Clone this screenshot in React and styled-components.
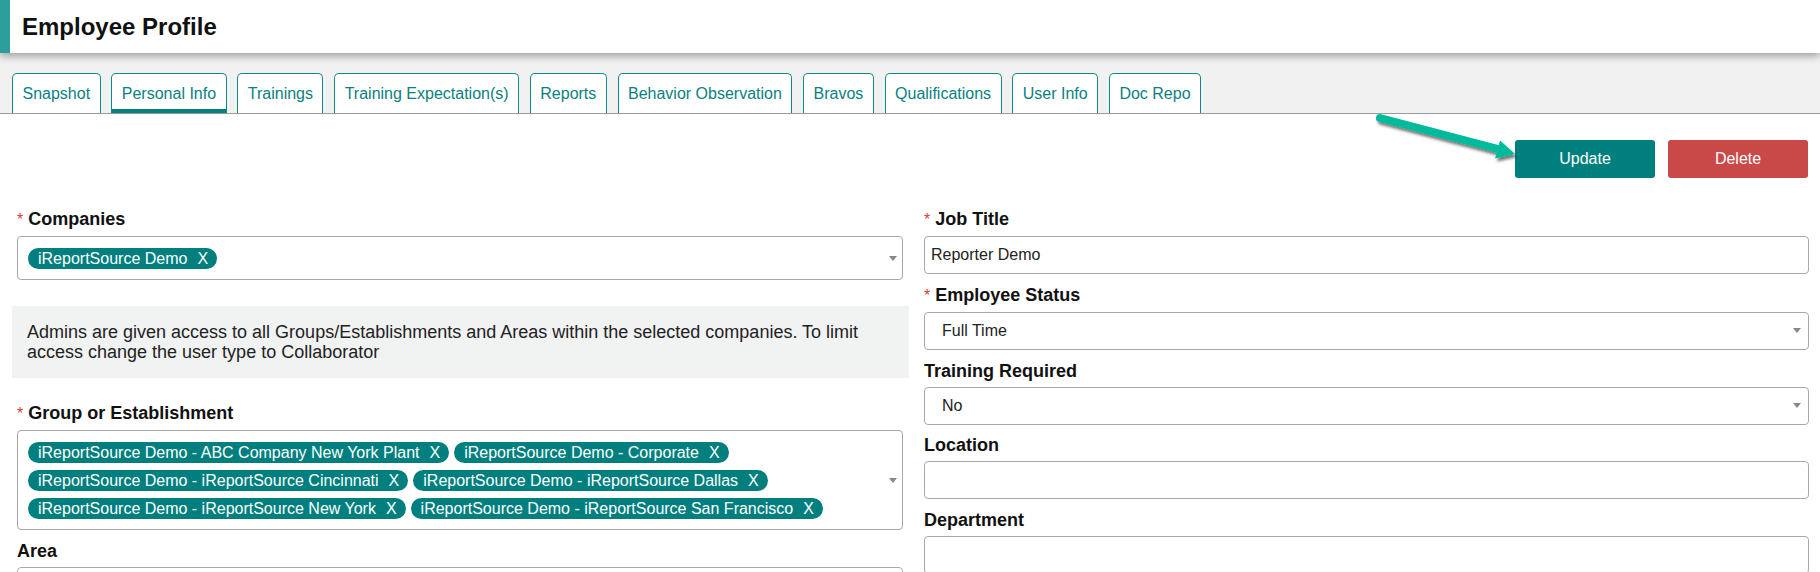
import styled, { createGlobalStyle } from "styled-components";

const GlobalStyle = createGlobalStyle`
  * {
    box-sizing: border-box;
  }
  body {
    margin: 0;
    background: #fff;
    color: #111;
    font-family: "Liberation Sans", Arial, Helvetica, sans-serif;
  }
`;

const Page = styled.div`
  position: relative;
  height: 572px;
  overflow: hidden;
`;

const Header = styled.header`
  position: relative;
  z-index: 2;
  display: flex;
  align-items: center;
  height: 53px;
  padding-left: 12px;
  background: #fff;
  border-left: 10px solid #2b9f9c;
  box-shadow: 0 3px 8px rgba(0, 0, 0, 0.35);
`;

const Title = styled.h1`
  margin: 0;
  font-size: 24px;
  font-weight: bold;
  color: #111;
`;

const TabBar = styled.nav`
  display: flex;
  align-items: flex-end;
  gap: 10.7px;
  height: 61px;
  padding: 20px 0 0 12px;
  background: #f1f1f1;
  border-bottom: 1px solid #9b9b9b;
`;

const Tab = styled.button`
  display: flex;
  align-items: center;
  height: 40px;
  padding: 0 9.5px;
  background: #fff;
  border: 1px solid #11898a;
  border-bottom: none;
  border-radius: 5px 5px 0 0;
  color: #0b7f80;
  font-family: inherit;
  font-size: 16px;
  white-space: nowrap;
  cursor: pointer;
  box-shadow: ${(p) => (p.$active ? "inset 0 -4px 0 #00807f" : "none")};
`;

const Content = styled.main`
  padding: 0 11px 0 12px;
`;

const Actions = styled.div`
  display: flex;
  justify-content: flex-end;
  gap: 13px;
  margin: 26px 1px 30px 0;
`;

const ActionButton = styled.button`
  width: 140px;
  height: 38px;
  border: none;
  border-radius: 3px;
  background: ${(p) => (p.$danger ? "#c94949" : "#007f7f")};
  color: #fff;
  font-family: inherit;
  font-size: 16px;
  cursor: pointer;
`;

const Form = styled.div`
  display: grid;
  grid-template-columns: 897px 1fr;
  column-gap: 15px;
  align-items: start;
`;

const LeftColumn = styled.div`
  padding: 0 6px 0 5px;
`;

const RightColumn = styled.div``;

const Field = styled.div`
  margin-bottom: ${(p) => p.$gap ?? 9.75}px;
`;

const Label = styled.label`
  display: block;
  margin-bottom: 5px;
  font-size: 18px;
  font-weight: bold;
  line-height: 22px;
  color: #111;
`;

const Required = styled.span`
  margin-right: 5px;
  color: #d43f3a;
  font-size: 16px;
  font-weight: normal;
`;

const MultiSelect = styled.div`
  display: flex;
  align-items: center;
  min-height: 44px;
  padding: 11px 5px 10px 10px;
  background: #fff;
  border: 1px solid #a9a9a9;
  border-radius: 4px;
`;

const ChipList = styled.div`
  flex: 1;
  display: flex;
  flex-wrap: wrap;
  gap: 7px 5px;
`;

const Chip = styled.span`
  display: inline-flex;
  align-items: center;
  height: 21px;
  padding: 0 9px 0 10px;
  border-radius: 11px;
  background: #007f7e;
  color: #fff;
  font-size: 16px;
  white-space: nowrap;
`;

const ChipRemove = styled.span`
  margin-left: 10px;
`;

const Caret = styled.span`
  flex-shrink: 0;
  width: 0;
  height: 0;
  margin-left: 8px;
  border-left: 4.5px solid transparent;
  border-right: 4.5px solid transparent;
  border-top: 5px solid #888;
`;

const InfoBox = styled.div`
  margin: 26px -6px 24px -5px;
  padding: 16px 15px;
  background: #f1f2f2;
  color: #222;
  font-size: 18px;
  line-height: 20px;
`;

const TextInput = styled.input`
  display: block;
  width: 100%;
  height: 38px;
  padding: 0 6px;
  background: #fff;
  border: 1px solid #a9a9a9;
  border-radius: 4px;
  color: #222;
  font-family: inherit;
  font-size: 16px;
`;

const SelectBox = styled.div`
  display: flex;
  align-items: center;
  justify-content: space-between;
  height: 38px;
  padding: 0 7px 0 17px;
  background: #fff;
  border: 1px solid #a9a9a9;
  border-radius: 4px;
  color: #222;
  font-size: 16px;
`;

const Arrow = styled.svg`
  position: absolute;
  left: 1368px;
  top: 108px;
  pointer-events: none;
`;

const tabs = [
  "Snapshot",
  "Personal Info",
  "Trainings",
  "Training Expectation(s)",
  "Reports",
  "Behavior Observation",
  "Bravos",
  "Qualifications",
  "User Info",
  "Doc Repo",
];

const groups = [
  "iReportSource Demo - ABC Company New York Plant",
  "iReportSource Demo - Corporate",
  "iReportSource Demo - iReportSource Cincinnati",
  "iReportSource Demo - iReportSource Dallas",
  "iReportSource Demo - iReportSource New York",
  "iReportSource Demo - iReportSource San Francisco",
];

function Tags({ items }) {
  return (
    <MultiSelect>
      <ChipList>
        {items.map((item) => (
          <Chip key={item}>
            {item}
            <ChipRemove>X</ChipRemove>
          </Chip>
        ))}
      </ChipList>
      <Caret />
    </MultiSelect>
  );
}

export default function App() {
  return (
    <Page>
      <GlobalStyle />
      <Header>
        <Title>Employee Profile</Title>
      </Header>
      <TabBar>
        {tabs.map((t) => (
          <Tab key={t} $active={t === "Personal Info"}>
            {t}
          </Tab>
        ))}
      </TabBar>

      <Content>
        <Actions>
          <ActionButton>Update</ActionButton>
          <ActionButton $danger>Delete</ActionButton>
        </Actions>

        <Form>
          <LeftColumn>
            <Field $gap={0}>
              <Label>
                <Required>*</Required>Companies
              </Label>
              <Tags items={["iReportSource Demo"]} />
            </Field>
            <InfoBox>
              Admins are given access to all Groups/Establishments and Areas
              within the selected companies. To limit access change the user
              type to Collaborator
            </InfoBox>
            <Field $gap={10}>
              <Label>
                <Required>*</Required>Group or Establishment
              </Label>
              <Tags items={groups} />
            </Field>
            <Field>
              <Label>Area</Label>
              <SelectBox>
                <span />
                <Caret />
              </SelectBox>
            </Field>
          </LeftColumn>

          <RightColumn>
            <Field>
              <Label>
                <Required>*</Required>Job Title
              </Label>
              <TextInput defaultValue="Reporter Demo" />
            </Field>
            <Field>
              <Label>
                <Required>*</Required>Employee Status
              </Label>
              <SelectBox>
                <span>Full Time</span>
                <Caret />
              </SelectBox>
            </Field>
            <Field>
              <Label>Training Required</Label>
              <SelectBox>
                <span>No</span>
                <Caret />
              </SelectBox>
            </Field>
            <Field>
              <Label>Location</Label>
              <TextInput />
            </Field>
            <Field>
              <Label>Department</Label>
              <TextInput />
            </Field>
          </RightColumn>
        </Form>
      </Content>

      <Arrow width="160" height="60" viewBox="0 0 160 60">
        <defs>
          <filter id="arrowShadow" x="-20%" y="-60%" width="140%" height="220%">
            <feDropShadow dx="2" dy="3" stdDeviation="1.8" floodColor="#000" floodOpacity="0.55" />
          </filter>
        </defs>
        <g filter="url(#arrowShadow)">
          <line x1="12" y1="10" x2="132" y2="41.5" stroke="#00bb9b" strokeWidth="8" strokeLinecap="round" />
          <polygon points="147,46 127,50.5 132,32.5" fill="#00bb9b" />
        </g>
      </Arrow>
    </Page>
  );
}
